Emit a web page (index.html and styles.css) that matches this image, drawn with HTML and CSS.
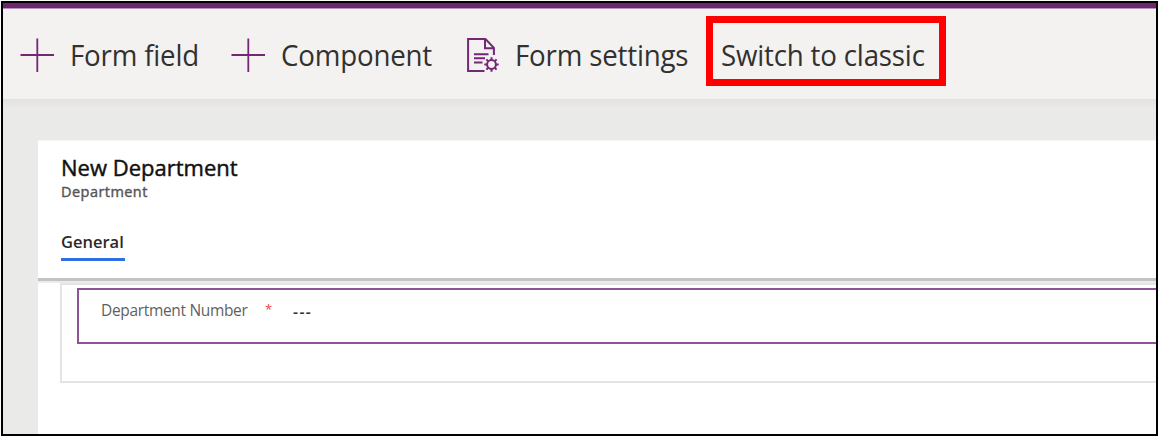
FILE: index.html
```html
<!DOCTYPE html>
<html lang="en">
<head>
<meta charset="utf-8">
<title>New Department</title>
<link rel="stylesheet" href="styles.css">
</head>
<body>
<div class="window">
  <header class="toolbar">
    <button class="command add-field">
      <svg class="plus" viewBox="0 0 34 34"><path d="M.5 17H34M17.3 .5V34"/></svg>
      <span class="label">Form field</span>
    </button>
    <button class="command add-component">
      <svg class="plus" viewBox="0 0 34 34"><path d="M.5 17H34M17.3 .5V34"/></svg>
      <span class="label">Component</span>
    </button>
    <button class="command settings">
      <svg class="form-icon" viewBox="0 0 32 35">
        <path d="M17.5 33H1.1V1.1H18.5L26.9 9.8V17M18 1.5V10.2H26.5M7 16.2H21.5M7 20.3H18M7 24.6H15.5"/>
        <circle cx="24.5" cy="26.5" r="4.4"/>
        <path d="M24.5 22.3V19.3M24.5 30.7V33.7M20.3 26.5H17.3M28.7 26.5H31.7M21.5 23.5L19.4 21.4M27.5 23.5L29.6 21.4M21.5 29.5L19.4 31.6M27.5 29.5L29.6 31.6"/>
      </svg>
      <span class="label">Form settings</span>
    </button>
    <button class="command classic"><span class="label">Switch to classic</span></button>
  </header>
  <main class="canvas">
    <article class="card">
      <div class="card-head">
        <h1>New Department</h1>
        <p class="entity">Department</p>
        <span class="tab">General</span>
      </div>
      <section class="section">
        <div class="field">
          <span class="field-name">Department Number</span>
          <span class="required">*</span>
          <span class="value">---</span>
        </div>
      </section>
    </article>
  </main>
</div>
</body>
</html>
```
FILE: styles.css
```css
* { box-sizing: border-box; }
body {
  margin: 0;
  padding: 1px;
  width: 1159px;
  height: 437px;
  overflow: hidden;
  background: #fff;
  font-family: "Open Sans", "Noto Sans", sans-serif;
}
.window {
  height: 435px;
  border: 2px solid #000;
  display: flex;
  flex-direction: column;
  overflow: hidden;
}
.toolbar {
  flex: none;
  height: 96px;
  display: flex;
  align-items: flex-start;
  background: linear-gradient(#f8f7f8, #f3f2f1 3px);
  border-top: 5px solid #6c286e;
  box-shadow: inset 0 1px #b993ba;
}
.command {
  display: flex;
  align-items: center;
  height: 70px;
  margin: 12px 0 0;
  padding: 0;
  border: 0;
  background: none;
  color: #323130;
  font: 29px/40px "Open Sans", "Noto Sans", sans-serif;
  white-space: nowrap;
  text-align: left;
}
.add-field { width: 211px; margin-left: 17px; }
.add-component { width: 236px; }
.settings { width: 239px; }
.classic {
  width: 240px;
  border: 7px solid #f00;
  padding: 8px 0 0 8px;
  margin-top: 8px;
}
.plus { width: 34px; height: 34px; margin-right: 16px; }
.plus path { fill: none; stroke: #742774; stroke-width: 1.8; }
.form-icon { width: 32px; height: 35px; margin-right: 16px; }
.form-icon path, .form-icon circle { fill: none; stroke: #742774; stroke-width: 2; }
.label {
  letter-spacing: -0.2px;
  transform: scaleX(0.955);
  transform-origin: left;
}
.canvas {
  flex: 1;
  display: flex;
  padding: 41px 0 0 35px;
  background: linear-gradient(#e2e1e0, #eaeae9 9px);
}
.card { flex: 1; background: #fff; border-top: 1px solid #f5f5f4; }
.card-head {
  height: 140px;
  padding: 11px 0 0 23px;
  border-bottom: 3px solid #c3c3c3;
  box-shadow: 0 2px #ebebeb;
}
h1 {
  margin: 0;
  font-size: 22px;
  line-height: 30px;
  font-weight: 400;
  -webkit-text-stroke: 0.45px #111;
  color: #111;
}
.entity {
  margin: 0;
  font-size: 14.5px;
  line-height: 19px;
  font-weight: 400;
  letter-spacing: 0.45px;
  -webkit-text-stroke: 0.4px #555;
  color: #555;
}
.tab {
  display: inline-block;
  margin-top: 28px;
  width: 64px;
  height: 32px;
  border-bottom: 3px solid #2f6fe4;
  font-size: 16.5px;
  line-height: 25px;
  font-weight: 600;
  color: #2a2a2a;
}
.section {
  height: 100px;
  margin: 2px 0 0 22px;
  padding: 3px 0 0 15px;
  border: 2px solid #e4e4e4;
  border-right: 0;
}
.field {
  display: flex;
  height: 56px;
  padding: 8px 0 0 22px;
  border: 2px solid #8d5394;
  border-right: 0;
  line-height: 25px;
  font-size: 15.5px;
  color: #5f5f5f;
}
.field-name { width: 164px; letter-spacing: -0.33px; }
.required { width: 28px; color: #e8443f; font-size: 13px; line-height: 23px; }
.value { color: #333; font-weight: 600; letter-spacing: 1.4px; line-height: 29px; }
```
